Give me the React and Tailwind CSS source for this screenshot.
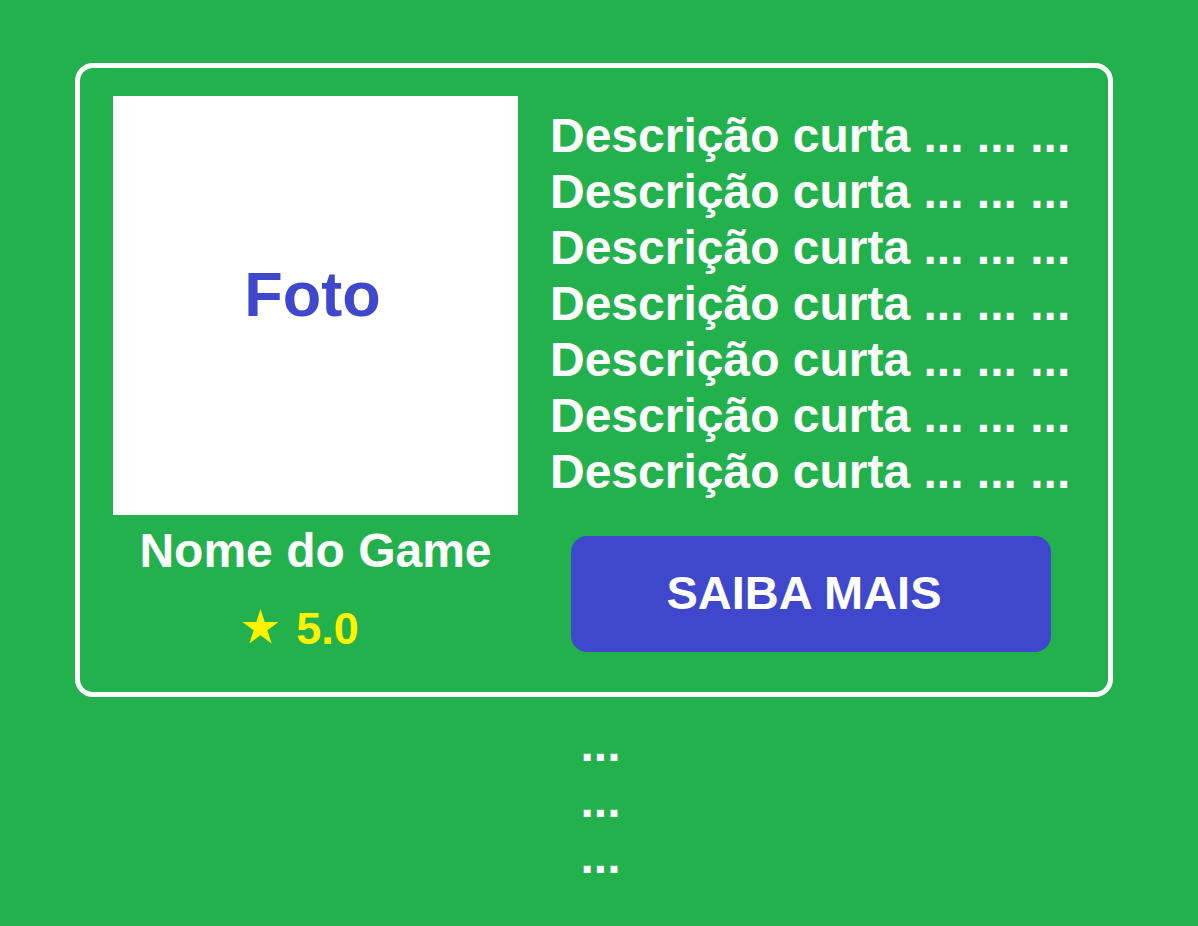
export default function App() {
  const lines = Array.from({ length: 7 })

  return (
    <div className="h-[926px] w-full bg-[#22b14c] overflow-hidden font-['Liberation_Sans',Arial,sans-serif] font-bold text-white">
      <div className="pt-[63px] pl-[75px]">
        <div className="w-[1038px] h-[634px] border-[5px] border-white rounded-[18px] pl-[33px] pt-[28px] flex gap-[32px]">
          <div className="w-[405px] flex flex-col items-center">
            <div className="w-[405px] h-[419px] bg-white flex items-center justify-center">
              <span className="text-[63px] leading-none text-[#3f48cc] mb-[22px] mr-[6px]">Foto</span>
            </div>
            <div className="mt-[8px] text-[48px] leading-[56px]">Nome do Game</div>
            <div className="mt-[22px] mr-[30px] flex items-center gap-[17px] text-[45px] leading-[56px] text-[#fff200]">
              <svg width="37" height="35" viewBox="0 0 24 23" className="mt-[-6px]">
                <polygon
                  points="12,0 14.8,8.6 23.9,8.6 16.5,13.9 19.3,22.6 12,17.3 4.7,22.6 7.5,13.9 0.1,8.6 9.2,8.6"
                  fill="#fff200"
                />
              </svg>
              <span>5.0</span>
            </div>
          </div>
          <div className="w-[525px] pt-[12px] flex flex-col">
            {lines.map((_, i) => (
              <div key={i} className="text-[48px] leading-[56px] whitespace-nowrap">
                Descrição curta ... ... ...
              </div>
            ))}
            <button className="mt-[36px] ml-[21px] w-[480px] h-[116px] rounded-[16px] bg-[#3f48cc] text-white text-[47px] leading-none pr-[14px] pb-[4px] flex items-center justify-center">
              SAIBA MAIS
            </button>
          </div>
        </div>
      </div>
      <div className="mt-[20px] flex flex-col items-center pl-[3px]">
        <div className="text-[48px] leading-[56px]">...</div>
        <div className="text-[48px] leading-[56px]">...</div>
        <div className="text-[48px] leading-[56px]">...</div>
      </div>
    </div>
  )
}
